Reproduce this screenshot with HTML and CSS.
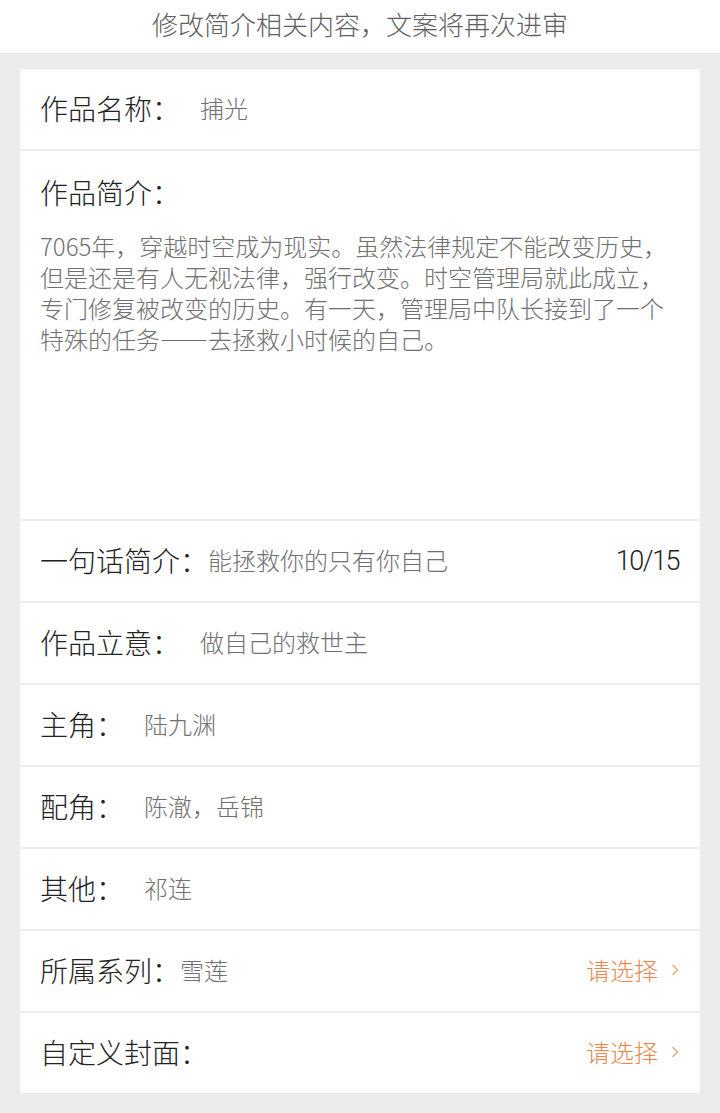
FILE: index.html
```html
<!DOCTYPE html>
<html lang="zh-CN">
<head>
    <meta charset="UTF-8">
    <title>修改作品信息</title>
    <link rel="stylesheet" href="styles.css">
</head>
<body>
    <div class="notice">修改简介相关内容，文案将再次进审</div>
    <div class="page">
        <div class="card">
            <div class="row">
                <span class="label">作品名称：</span>
                <span class="value spaced">捕光</span>
            </div>
            <div class="row intro">
                <div class="label">作品简介：</div>
                <p class="intro-text">7065年，穿越时空成为现实。虽然法律规定不能改变历史，但是还是有人无视法律，强行改变。时空管理局就此成立，专门修复被改变的历史。有一天，管理局中队长接到了一个特殊的任务——去拯救小时候的自己。</p>
            </div>
            <div class="row">
                <span class="label">一句话简介：</span>
                <span class="value">能拯救你的只有你自己</span>
                <span class="count">10/15</span>
            </div>
            <div class="row">
                <span class="label">作品立意：</span>
                <span class="value spaced">做自己的救世主</span>
            </div>
            <div class="row">
                <span class="label">主角：</span>
                <span class="value spaced">陆九渊</span>
            </div>
            <div class="row">
                <span class="label">配角：</span>
                <span class="value spaced">陈澈，岳锦</span>
            </div>
            <div class="row">
                <span class="label">其他：</span>
                <span class="value spaced">祁连</span>
            </div>
            <div class="row">
                <span class="label">所属系列：</span>
                <span class="value">雪莲</span>
                <span class="pick">请选择
                    <svg class="arrow" width="8" height="14" viewBox="0 0 8 14"><polyline points="1.5,2 6.5,7 1.5,12" /></svg>
                </span>
            </div>
            <div class="row">
                <span class="label">自定义封面：</span>
                <span class="pick">请选择
                    <svg class="arrow" width="8" height="14" viewBox="0 0 8 14"><polyline points="1.5,2 6.5,7 1.5,12" /></svg>
                </span>
            </div>
        </div>
    </div>
</body>
</html>
```

FILE: styles.css
```css
body { margin: 0; background: #ececec; font-family: "Noto Sans CJK SC", "Noto Sans", sans-serif; font-weight: 300; }
.notice { background: #fff; height: 53px; line-height: 48px; text-align: center; font-size: 26px; color: #5e5e5e; }
.page { padding: 16px 20px 20px; }
.card { display: flex; flex-direction: column; gap: 2px; background: #ececec; }

.row { background: #fff; height: 80px; padding: 0 21px 0 20px; display: flex; align-items: center; }
.label { font-size: 28px; color: #222; white-space: nowrap; line-height: 36px; margin-top: -3px; }
.value { font-size: 24px; color: #707070; flex: 1; margin-top: -3px; }
.value.spaced { margin-left: 20px; }
.count { font-family: Roboto, sans-serif; font-weight: 300; font-size: 27px; color: #222; letter-spacing: -1.5px; }

.intro { height: 368px; display: block; padding-top: 21px; box-sizing: border-box; }
.intro .label { line-height: 40px; margin-top: 0; }
.intro-text { margin: 18px 0 0; font-size: 24px; line-height: 31px; color: #707070; }

.pick { margin-left: auto; font-size: 24px; color: #e8874c; display: flex; align-items: center; gap: 13px; margin-top: -3px; }
.arrow polyline { fill: none; stroke: #eda57c; stroke-width: 1.4; }
```
